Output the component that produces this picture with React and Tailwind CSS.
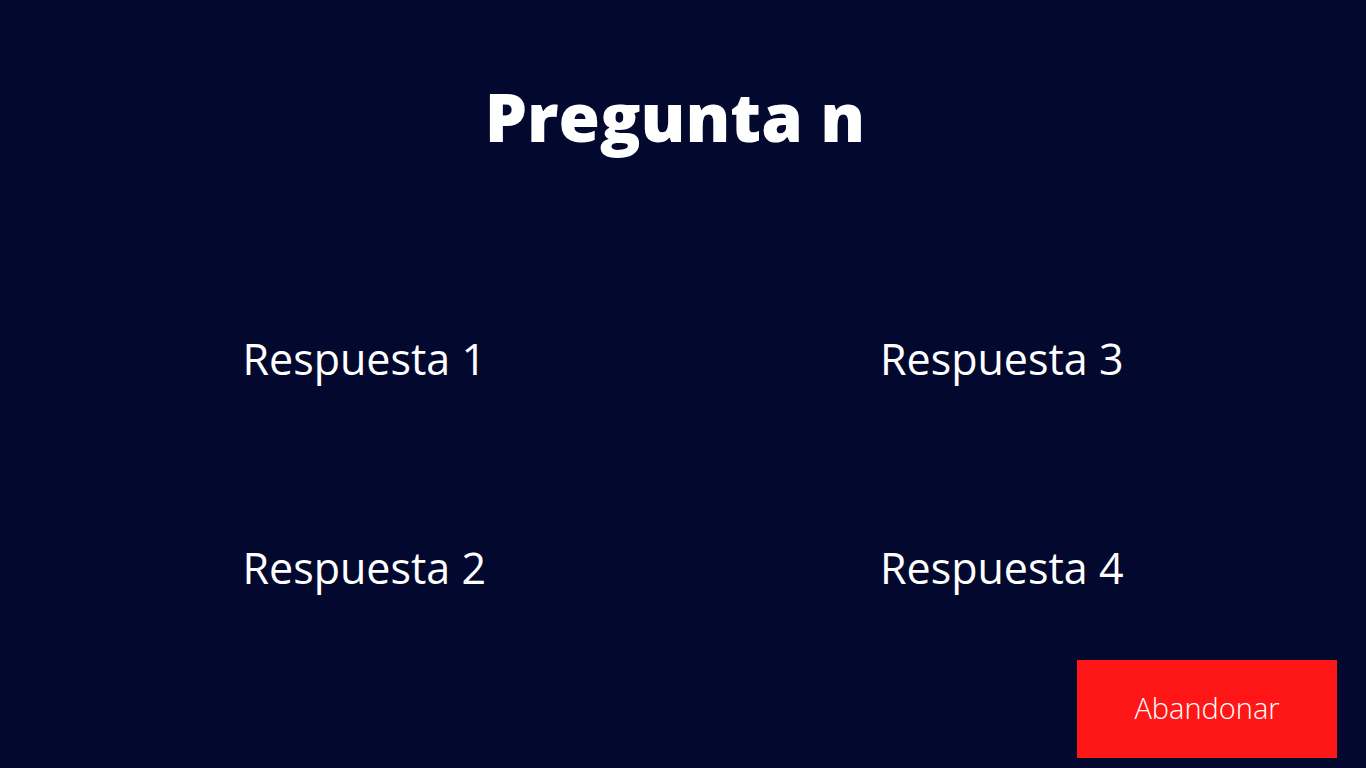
const answers = ["Respuesta 1", "Respuesta 2", "Respuesta 3", "Respuesta 4"];

export default function App() {
  return (
    <main className="flex min-h-screen flex-col bg-[#03092e] font-['Open_Sans','Noto_Sans',sans-serif] text-white">
      <h1 className="pt-[70px] pr-4 text-center text-[67px] leading-[92px] font-extrabold">Pregunta n</h1>
      <div className="mt-[165px] grid grid-flow-col grid-cols-2 grid-rows-2 gap-x-[394px] gap-y-[145px] self-center">
        {answers.map((answer) => (
          <button key={answer} type="button" className="cursor-pointer justify-self-start text-left text-[43px] leading-[64px] whitespace-nowrap">
            {answer}
          </button>
        ))}
      </div>
      <button type="button" className="mt-[60px] mr-[29px] h-[98px] w-[260px] cursor-pointer self-end bg-[#ff1717] pb-[2px] text-[29px] font-light">
        Abandonar
      </button>
    </main>
  );
}
